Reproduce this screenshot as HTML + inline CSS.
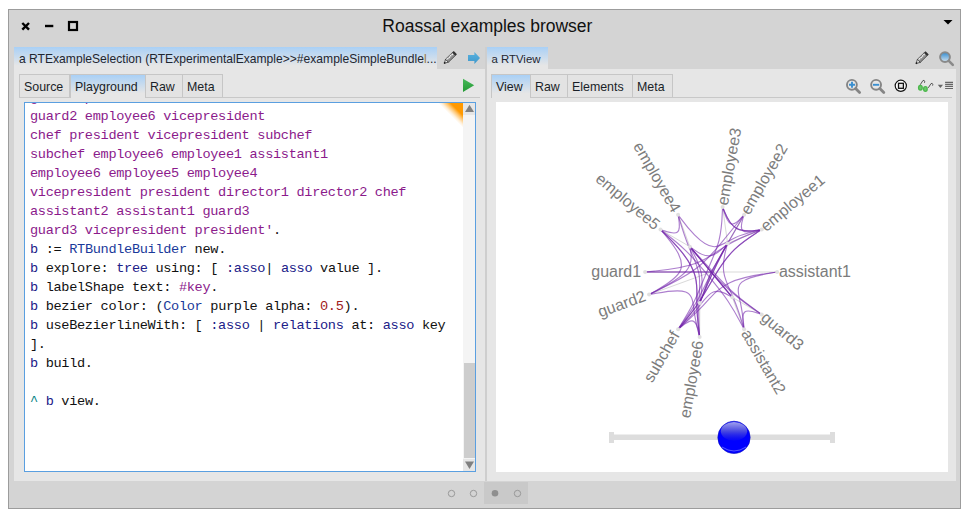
<!DOCTYPE html>
<html><head><meta charset="utf-8">
<style>
*{margin:0;padding:0;box-sizing:border-box}
html,body{width:971px;height:520px;background:#fff;overflow:hidden;font-family:"Liberation Sans",sans-serif;color:#222}
.abs{position:absolute}
#win{position:absolute;left:8px;top:9px;width:953px;height:500px;background:#d4d4d4;border:1px solid #9c9c9c}
#title{position:absolute;left:0;top:0;width:971px;text-align:center;font-size:17.5px;color:#111}
.pane{position:absolute;background:#e6e6e6}
.ptab{position:absolute;height:22px;background:linear-gradient(#a9d0f6,#e6e6e6 85%);font-size:12.1px;line-height:24px;padding-left:5px;white-space:nowrap;overflow:hidden;color:#1f2630}
.tab{position:absolute;top:74px;height:23px;border:1px solid #c6c6c6;border-bottom:none;background:#e3e3e3;font-size:12.4px;line-height:25px;color:#1a1f28;padding-left:4px;white-space:nowrap}
.tab.sel{height:24px;background:linear-gradient(#a9d0f6,#e6e6e6 80%)}
.code{position:absolute;font-family:"Liberation Mono",monospace;font-size:13.6px;letter-spacing:-0.32px;line-height:19px;white-space:pre;color:#111}
.p{color:#8b1a8b}.v{color:#202088}.c{color:#1a3a9a}.n{color:#a02020}.t{color:#008080}
</style></head><body>
<div id="win"></div>
<div id="title" style="top:15.9px;padding-left:3.8px">Roassal examples browser</div>

<!-- window buttons -->
<svg class="abs" style="left:0;top:0" width="971" height="60">
  <path d="M22.3 23 L29 29.7 M29 23 L22.3 29.7" stroke="#000" stroke-width="2.4" stroke-linecap="butt"/>
  <rect x="45" y="24.8" width="8.3" height="2.4" fill="#000"/>
  <rect x="69" y="22" width="8" height="8" fill="none" stroke="#000" stroke-width="2.2"/>
  <path d="M943.5 20 L952.5 20 L948 24.5 Z" fill="#000"/>
</svg>

<!-- left pane -->
<div class="pane" style="left:14px;top:69px;width:471px;height:412px"></div>
<div class="ptab" style="left:14px;top:47px;width:423px">a RTExampleSelection (RTExperimentalExample&gt;&gt;#exampleSimpleBundle<span style="color:#9a7848">l</span>...</div>


<!-- left tabs -->
<div class="abs" style="left:19px;top:97px;width:461px;height:1px;background:#c8c8c8"></div>
<div class="tab" style="left:19px;width:51px">Source</div>
<div class="tab sel" style="left:70px;width:76px;height:24px">Playground</div>
<div class="tab" style="left:145px;width:38px">Raw</div>
<div class="tab" style="left:182px;width:41px">Meta</div>
<svg class="abs" style="left:462px;top:77px" width="14" height="16"><defs><linearGradient id="playg" x1="0" y1="0" x2="0" y2="1"><stop offset="0" stop-color="#48b85a"/><stop offset="1" stop-color="#239a34"/></linearGradient></defs><path d="M1 1.7 L12.2 8.3 L1 15 Z" fill="url(#playg)"/></svg>
<!-- code area -->
<div class="abs" style="left:24px;top:102px;width:452px;height:370px;background:#fff;border:1px solid #5a9fe0;overflow:hidden">
 <div class="code" style="left:5px;top:-15.0px"><span class="p">guard1 president director1</span>
<span class="p">guard2 employee6 vicepresident</span>
<span class="p">chef president vicepresident subchef</span>
<span class="p">subchef employee6 employee1 assistant1</span>
<span class="p">employee6 employee5 employee4</span>
<span class="p">vicepresident president director1 director2 chef</span>
<span class="p">assistant2 assistant1 guard3</span>
<span class="p">guard3 vicepresident president'</span>.
<span class="v">b</span> := <span class="c">RTBundleBuilder</span> new.
<span class="v">b</span> explore: <span class="v">tree</span> using: [ <span class="v">:asso</span>| <span class="v">asso</span> value ].
<span class="v">b</span> labelShape text: <span class="p">#key</span>.
<span class="v">b</span> bezier color: (<span class="c">Color</span> purple alpha: <span class="n">0.5</span>).
<span class="v">b</span> useBezierlineWith: [ <span class="v">:asso</span> | <span class="v">relations</span> at: <span class="v">asso</span> key
].
<span class="v">b</span> build.

<span class="t">^</span> <span class="v">b</span> view.</div>
 <div class="abs" style="left:414px;top:0;width:24px;height:24px;background:linear-gradient(to bottom left,#ff9900 0,#ff9900 26%,rgba(255,153,0,0.55) 35%,rgba(255,153,0,0.15) 45%,rgba(255,153,0,0) 52%)"></div>
 <div class="abs" style="left:438px;top:0;width:12px;height:368px;background:#f4f4f4"></div>
 <div class="abs" style="left:438px;top:0;width:12px;height:12px;background:#e6e6e6"></div>
 <svg class="abs" style="left:440px;top:1px" width="10" height="10"><path d="M0 8 L4.5 0.8 L9 8 Z" fill="#808080"/></svg>
 <div class="abs" style="left:439px;top:260px;width:11px;height:95px;background:#cdcdcd"></div>
 <div class="abs" style="left:438px;top:356px;width:12px;height:12px;background:#e6e6e6"></div>
 <svg class="abs" style="left:440px;top:358px" width="10" height="10"><path d="M0 0.5 L9 0.5 L4.5 8 Z" fill="#808080"/></svg>
</div>

<!-- right pane -->
<div class="abs" style="left:485px;top:47px;width:2px;height:434px;background:#cecece"></div>
<div class="pane" style="left:487px;top:69px;width:469px;height:412px"></div>
<div class="ptab" style="left:487px;top:47px;width:61px;font-size:11.4px;padding-left:4.5px">a RTView</div>


<!-- right tabs -->
<div class="abs" style="left:491px;top:97px;width:461px;height:1px;background:#c8c8c8"></div>
<div class="tab sel" style="left:491px;width:40px">View</div>
<div class="tab" style="left:530px;width:38px">Raw</div>
<div class="tab" style="left:567px;width:66px">Elements</div>
<div class="tab" style="left:632px;width:41px">Meta</div>
<div class="abs" style="left:496px;top:102px;width:452px;height:370px;background:#fff"></div>

<!-- GRAPH -->
<svg class="abs" style="left:0;top:0" width="971" height="520"><g stroke="#d9d9d9" stroke-width="1" fill="none"><path d="M777.1 272.0 L711.1 272.0"/><path d="M761.7 314.4 L732.3 297.3"/><path d="M744.1 329.2 L732.3 297.3"/><path d="M699.6 337.0 L699.8 303.0"/><path d="M678.1 329.2 L699.8 303.0"/><path d="M649.1 294.6 L711.1 272.0"/><path d="M645.1 272.0 L711.1 272.0"/><path d="M660.5 229.6 L689.9 246.7"/><path d="M678.1 214.8 L689.9 246.7"/><path d="M722.6 207.0 L727.6 243.4"/><path d="M744.1 214.8 L727.6 243.4"/><path d="M761.7 229.6 L727.6 243.4"/><path d="M732.3 297.3 L711.1 272.0"/><path d="M699.8 303.0 L711.1 272.0"/><path d="M689.9 246.7 L711.1 272.0"/><path d="M727.6 243.4 L711.1 272.0"/></g><g stroke="#7222aa" stroke-opacity="0.58" stroke-width="1.15" fill="none"><path d="M645.1 272.0 L711.1 272.0"/><path d="M645.1 272.0 C645.1 272.0 645.1 272.0 654.3 271.1 C663.5 270.1 681.9 268.2 695.3 263.5 C708.7 258.7 717.2 251.1 727.4 245.0 C737.7 238.9 749.7 234.2 755.7 231.9 C761.7 229.6 761.7 229.6 761.7 229.6"/><path d="M649.1 294.6 C649.1 294.6 649.1 294.6 656.4 293.3 C663.7 291.9 678.4 289.3 685.7 292.0 C693.0 294.8 693.0 302.9 694.1 311.2 C695.2 319.6 697.4 328.3 698.5 332.7 C699.6 337.0 699.6 337.0 699.6 337.0"/><path d="M649.1 294.6 C649.1 294.6 649.1 294.6 656.6 290.7 C664.2 286.9 679.3 279.2 686.1 271.2 C692.9 263.2 691.4 255.0 690.6 250.8 C689.9 246.7 689.9 246.7 689.9 246.7"/><path d="M649.1 294.6 C649.1 294.6 649.1 294.6 657.4 290.5 C665.7 286.5 682.3 278.5 694.4 269.8 C706.5 261.1 714.0 251.9 721.5 242.6 C729.1 233.4 736.6 224.1 740.3 219.5 C744.1 214.8 744.1 214.8 744.1 214.8"/><path d="M732.3 297.3 L711.1 272.0"/><path d="M732.3 297.3 C732.3 297.3 732.3 297.3 728.8 293.1 C725.2 288.9 718.2 280.4 711.1 272.0 C704.0 263.6 697.0 255.1 693.4 250.9 C689.9 246.7 689.9 246.7 689.9 246.7"/><path d="M732.3 297.3 C732.3 297.3 732.3 297.3 729.0 295.5 C725.7 293.6 719.0 290.0 713.3 292.0 C707.7 294.0 703.0 301.6 697.3 308.7 C691.6 315.9 684.9 322.5 681.5 325.8 C678.1 329.2 678.1 329.2 678.1 329.2"/><path d="M678.1 329.2 C678.1 329.2 678.1 329.2 681.0 326.8 C683.9 324.5 689.7 319.7 693.2 321.1 C696.8 322.4 698.2 329.7 698.9 333.3 C699.6 337.0 699.6 337.0 699.6 337.0"/><path d="M678.1 329.2 C678.1 329.2 678.1 329.2 681.7 324.9 C685.2 320.6 692.4 312.1 698.4 303.0 C704.5 294.0 709.6 284.5 715.1 275.2 C720.7 265.9 726.8 256.9 734.6 249.3 C742.5 241.8 752.1 235.7 756.9 232.6 C761.7 229.6 761.7 229.6 761.7 229.6"/><path d="M678.1 329.2 C678.1 329.2 678.1 329.2 682.5 325.3 C686.8 321.4 695.6 313.6 703.3 305.4 C711.0 297.1 717.6 288.4 729.8 282.7 C741.9 277.1 759.5 274.5 768.3 273.3 C777.1 272.0 777.1 272.0 777.1 272.0"/><path d="M699.6 337.0 C699.6 337.0 699.6 337.0 699.0 331.8 C698.4 326.6 697.1 316.2 696.9 306.2 C696.8 296.1 697.7 286.3 695.4 277.1 C693.2 267.9 687.6 259.2 681.2 251.4 C674.9 243.6 667.7 236.6 664.1 233.1 C660.5 229.6 660.5 229.6 660.5 229.6"/><path d="M699.6 337.0 C699.6 337.0 699.6 337.0 699.3 331.6 C699.0 326.1 698.3 315.3 698.7 304.7 C699.1 294.1 700.7 283.8 699.0 274.1 C697.2 264.4 692.3 255.3 688.3 245.5 C684.3 235.7 681.2 225.3 679.6 220.1 C678.1 214.8 678.1 214.8 678.1 214.8"/><path d="M689.9 246.7 L711.1 272.0"/><path d="M689.9 246.7 C689.9 246.7 689.9 246.7 692.3 251.1 C694.8 255.5 699.7 264.3 701.4 273.7 C703.0 283.1 701.4 293.1 700.6 298.0 C699.8 303.0 699.8 303.0 699.8 303.0"/><path d="M689.9 246.7 C689.9 246.7 689.9 246.7 693.3 249.1 C696.6 251.6 703.4 256.4 709.7 255.8 C716.0 255.3 721.8 249.4 724.7 246.4 C727.6 243.4 727.6 243.4 727.6 243.4"/><path d="M689.9 246.7 C689.9 246.7 689.9 246.7 693.4 250.9 C697.0 255.1 704.0 263.6 711.1 272.0 C718.2 280.4 725.2 288.9 728.8 293.1 C732.3 297.3 732.3 297.3 732.3 297.3"/><path d="M744.1 329.2 C744.1 329.2 744.1 329.2 743.7 324.7 C743.2 320.2 742.3 311.3 740.5 303.1 C738.7 294.8 735.9 287.2 741.8 282.1 C747.8 277.1 762.4 274.5 769.8 273.3 C777.1 272.0 777.1 272.0 777.1 272.0"/><path d="M744.1 329.2 C744.1 329.2 744.1 329.2 743.5 325.5 C742.9 321.8 741.7 314.4 744.7 312.0 C747.6 309.5 754.6 312.0 758.1 313.2 C761.7 314.4 761.7 314.4 761.7 314.4"/><path d="M761.7 314.4 C761.7 314.4 761.7 314.4 757.1 311.2 C752.6 308.0 743.5 301.5 735.3 294.3 C727.0 287.0 719.6 279.0 712.2 270.9 C704.8 262.9 697.3 254.8 693.6 250.8 C689.9 246.7 689.9 246.7 689.9 246.7"/><path d="M761.7 314.4 C761.7 314.4 761.7 314.4 757.0 311.3 C752.4 308.2 743.2 301.9 734.8 294.8 C726.3 287.8 718.7 279.9 714.9 275.9 C711.1 272.0 711.1 272.0 711.1 272.0"/><path d="M761.7 229.6 C761.7 229.6 761.7 229.6 757.7 230.5 C753.7 231.4 745.7 233.1 742.8 230.7 C739.8 228.2 742.0 221.5 743.0 218.2 C744.1 214.8 744.1 214.8 744.1 214.8"/><path d="M761.7 229.6 C761.7 229.6 761.7 229.6 756.9 230.2 C752.2 230.8 742.8 232.1 736.3 228.3 C729.8 224.6 726.2 215.8 724.4 211.4 C722.6 207.0 722.6 207.0 722.6 207.0"/><path d="M761.7 229.6 C761.7 229.6 761.7 229.6 756.9 232.6 C752.1 235.7 742.5 241.8 734.6 249.3 C726.8 256.9 720.7 265.9 715.1 275.2 C709.6 284.5 704.5 294.0 698.4 303.0 C692.4 312.1 685.2 320.6 681.7 324.9 C678.1 329.2 678.1 329.2 678.1 329.2"/><path d="M744.1 214.8 C744.1 214.8 744.1 214.8 741.7 217.4 C739.4 220.0 734.6 225.2 731.0 223.9 C727.4 222.6 725.0 214.8 723.8 210.9 C722.6 207.0 722.6 207.0 722.6 207.0"/><path d="M744.1 214.8 C744.1 214.8 744.1 214.8 741.4 219.6 C738.6 224.4 733.1 233.9 727.6 243.4 C722.1 252.9 716.6 262.5 711.6 272.2 C706.6 282.0 702.2 292.0 696.7 301.6 C691.2 311.1 684.6 320.1 681.4 324.6 C678.1 329.2 678.1 329.2 678.1 329.2"/><path d="M722.6 207.0 C722.6 207.0 722.6 207.0 724.4 211.4 C726.2 215.8 729.8 224.6 736.3 228.3 C742.8 232.1 752.2 230.8 756.9 230.2 C761.7 229.6 761.7 229.6 761.7 229.6"/><path d="M722.6 207.0 C722.6 207.0 722.6 207.0 722.3 212.7 C722.1 218.4 721.6 229.7 719.0 240.3 C716.4 250.9 711.6 260.6 707.3 270.7 C703.1 280.7 699.3 291.0 694.5 300.8 C689.7 310.6 683.9 319.9 681.0 324.5 C678.1 329.2 678.1 329.2 678.1 329.2"/><path d="M678.1 214.8 C678.1 214.8 678.1 214.8 678.7 218.5 C679.3 222.2 680.5 229.6 677.5 232.0 C674.6 234.5 667.6 232.0 664.1 230.8 C660.5 229.6 660.5 229.6 660.5 229.6"/><path d="M678.1 214.8 C678.1 214.8 678.1 214.8 680.7 218.3 C683.2 221.7 688.4 228.6 694.5 234.8 C700.6 241.0 707.6 246.5 714.1 246.7 C720.7 246.9 726.8 241.6 734.6 237.9 C742.5 234.1 752.1 231.9 756.9 230.7 C761.7 229.6 761.7 229.6 761.7 229.6"/><path d="M660.5 229.6 C660.5 229.6 660.5 229.6 663.2 232.7 C665.9 235.9 671.3 242.2 675.8 249.3 C680.4 256.5 684.1 264.4 679.5 272.1 C674.9 279.8 662.0 287.2 655.5 290.9 C649.1 294.6 649.1 294.6 649.1 294.6"/><path d="M660.5 229.6 C660.5 229.6 660.5 229.6 664.1 233.1 C667.7 236.6 674.9 243.6 681.2 251.4 C687.6 259.2 693.2 267.9 695.4 277.1 C697.7 286.3 696.8 296.1 696.9 306.2 C697.1 316.2 698.4 326.6 699.0 331.8 C699.6 337.0 699.6 337.0 699.6 337.0"/><path d="M660.5 229.6 C660.5 229.6 660.5 229.6 664.9 233.0 C669.2 236.3 677.9 243.1 685.7 250.6 C693.5 258.2 700.6 266.6 707.6 274.9 C714.6 283.3 721.6 291.7 727.7 300.7 C733.8 309.8 739.0 319.5 741.5 324.3 C744.1 329.2 744.1 329.2 744.1 329.2"/><path d="M699.8 303.0 C699.8 303.0 699.8 303.0 701.9 297.9 C703.9 292.8 708.0 282.7 712.7 272.7 C717.3 262.8 722.4 253.1 725.0 248.3 C727.6 243.4 727.6 243.4 727.6 243.4"/><path d="M727.6 243.4 C727.6 243.4 727.6 243.4 725.0 248.3 C722.4 253.1 717.3 262.8 712.7 272.7 C708.0 282.7 703.9 292.8 701.9 297.9 C699.8 303.0 699.8 303.0 699.8 303.0"/><path d="M727.6 243.4 C727.6 243.4 727.6 243.4 726.3 248.2 C725.0 252.9 722.5 262.5 723.7 271.7 C724.9 280.9 729.9 289.7 733.9 299.3 C737.9 308.8 741.0 319.0 742.6 324.1 C744.1 329.2 744.1 329.2 744.1 329.2"/><path d="M711.1 272.0 L645.1 272.0"/><path d="M711.1 272.0 L699.8 303.0"/><path d="M711.1 272.0 L727.6 243.4"/></g><g fill="#e0e0e0"><circle cx="777.1" cy="272.0" r="2"/><circle cx="761.7" cy="314.4" r="2"/><circle cx="744.1" cy="329.2" r="2"/><circle cx="699.6" cy="337.0" r="2"/><circle cx="678.1" cy="329.2" r="2"/><circle cx="649.1" cy="294.6" r="2"/><circle cx="645.1" cy="272.0" r="2"/><circle cx="660.5" cy="229.6" r="2"/><circle cx="678.1" cy="214.8" r="2"/><circle cx="722.6" cy="207.0" r="2"/><circle cx="744.1" cy="214.8" r="2"/><circle cx="761.7" cy="229.6" r="2"/><circle cx="732.3" cy="297.3" r="2"/><circle cx="699.8" cy="303.0" r="2"/><circle cx="689.9" cy="246.7" r="2"/><circle cx="727.6" cy="243.4" r="2"/></g><g fill="#7c7c7c" font-size="16" font-family="Liberation Sans"><text transform="translate(777.1 272.0) rotate(0.0)" x="1.8" y="4.8">assistant1</text><text transform="translate(761.7 314.4) rotate(40.0)" x="1.8" y="4.8">guard3</text><text transform="translate(744.1 329.2) rotate(60.0)" x="1.8" y="4.8">assistant2</text><text transform="translate(699.6 337.0) rotate(-80.0)" x="-4" y="4.8" text-anchor="end">employee6</text><text transform="translate(678.1 329.2) rotate(-60.0)" x="-4" y="4.8" text-anchor="end">subchef</text><text transform="translate(649.1 294.6) rotate(-20.0)" x="-4" y="4.8" text-anchor="end">guard2</text><text transform="translate(645.1 272.0) rotate(0.0)" x="-4" y="4.8" text-anchor="end">guard1</text><text transform="translate(660.5 229.6) rotate(40.0)" x="-4" y="4.8" text-anchor="end">employee5</text><text transform="translate(678.1 214.8) rotate(60.0)" x="-4" y="4.8" text-anchor="end">employee4</text><text transform="translate(722.6 207.0) rotate(-80.0)" x="1.8" y="4.8">employee3</text><text transform="translate(744.1 214.8) rotate(-60.0)" x="1.8" y="4.8">employee2</text><text transform="translate(761.7 229.6) rotate(-40.0)" x="1.8" y="4.8">employee1</text></g></svg>
<!-- /GRAPH -->

<!-- slider -->
<svg class="abs" style="left:0;top:0" width="971" height="520">
 <defs>
  <radialGradient id="ballg" cx="0.5" cy="0.3" r="0.6">
   <stop offset="0" stop-color="#8080f0"/><stop offset="0.55" stop-color="#2020e8"/><stop offset="1" stop-color="#0000ff"/>
  </radialGradient>
  <linearGradient id="ballh" x1="0" y1="0" x2="0" y2="1"><stop offset="0" stop-color="#a0a0ee"/><stop offset="0.5" stop-color="#4848e0"/><stop offset="1" stop-color="#1a1ae8" stop-opacity="0.3"/></linearGradient>
 </defs>
 <rect x="609" y="434.5" width="226" height="5.5" fill="#dddddd"/>
 <rect x="609" y="432" width="5" height="11" fill="#dddddd"/>
 <rect x="830" y="432" width="5" height="11" fill="#dddddd"/>
 <circle cx="734" cy="437.4" r="16.2" fill="#0000ff" stroke="#1010c0" stroke-width="0.6"/>
 <ellipse cx="734" cy="431.3" rx="13.2" ry="9.3" fill="url(#ballh)"/>
 <path d="M722 447 Q734 455 746 447" stroke="#a0a0ff" stroke-width="0.8" fill="none" opacity="0.7"/>
</svg>

<!-- bottom bar -->
<div class="abs" style="left:484px;top:482px;width:44px;height:22px;background:#c9c9c9"></div>


<!-- icons overlay -->
<svg class="abs" style="left:0;top:0" width="971" height="520">
 <defs>
  <linearGradient id="lens" x1="0" y1="0" x2="0" y2="1"><stop offset="0" stop-color="#2f8ad0"/><stop offset="1" stop-color="#d6e4ee"/></linearGradient>
  <linearGradient id="arr" x1="0" y1="0" x2="0" y2="1"><stop offset="0" stop-color="#5ab2de"/><stop offset="1" stop-color="#3f98cc"/></linearGradient>
  <g id="pencil">
   <path d="M0.6 0 L4.2 -2.1 L4.2 2.1 Z" fill="#f2f2f2" stroke="#3a3a3a" stroke-width="0.8" stroke-linejoin="round"/>
   <circle cx="0.9" cy="0" r="0.9" fill="#222"/>
   <rect x="4.2" y="-2.1" width="9.6" height="4.2" fill="#8c8c8c" stroke="#3c3c3c" stroke-width="0.7"/>
   <rect x="4.6" y="-1.7" width="9" height="1.5" fill="#fff"/>
   <path d="M4.8 -0.95 H13.6" stroke="#a0a0a0" stroke-width="1.5" stroke-dasharray="1 1"/>
   <rect x="13.6" y="-2.3" width="2.2" height="4.6" fill="#333"/>
  </g>
 </defs>
 <use href="#pencil" transform="translate(444,63.6) rotate(-44)"/>
 <path d="M468 55 H474.4 V52 L480 58 L474.4 64 V61 H468 Z" fill="url(#arr)"/>
 <use href="#pencil" transform="translate(915.8,63.8) rotate(-44)"/>
 <circle cx="945" cy="57.1" r="4.9" fill="url(#lens)" stroke="#8a8a8a" stroke-width="2"/>
 <path d="M948.8 60.9 L952.8 64.9" stroke="#8a8a8a" stroke-width="2.6" stroke-linecap="round"/>
 <!-- toolbar -->
 <g stroke="#858585" fill="none">
  <circle cx="851.9" cy="84.8" r="4.95" stroke-width="1.9"/>
  <path d="M855.6 88.5 L859.6 92.5" stroke-width="2.8" stroke-linecap="round"/>
  <circle cx="876.1" cy="84.8" r="4.95" stroke-width="1.9"/>
  <path d="M879.8 88.5 L883.8 92.5" stroke-width="2.8" stroke-linecap="round"/>
 </g>
 <path d="M849 84.8 H855 M852 81.8 V87.8" stroke="#3a8fd0" stroke-width="1.9"/>
 <path d="M873 84.8 H879.2" stroke="#3a8fd0" stroke-width="1.9"/>
 <circle cx="900.8" cy="85.8" r="5.6" fill="#fff" stroke="#111" stroke-width="1.2"/>
 <rect x="898.5" y="83.3" width="4.9" height="5" fill="#e8e8e8" stroke="#111" stroke-width="1.3"/>
 <path d="M920.2 84.8 L922.9 80.6 Q924.3 79.8 924.7 81.2 L924.5 82.8 M928.3 87.8 L931 83.6 Q932.4 82.8 932.8 84.2 L932.6 85.6" stroke="#555" stroke-width="1" fill="none"/>
 <ellipse cx="920.4" cy="87.8" rx="2.5" ry="3" fill="#4cb84c"/>
 <ellipse cx="925.4" cy="88.9" rx="2.5" ry="3" fill="#4cb84c"/>
 <ellipse cx="920.4" cy="87.8" rx="1.2" ry="1.8" fill="#7fd07f" opacity="0.6"/>
 <ellipse cx="925.4" cy="88.9" rx="1.2" ry="1.8" fill="#7fd07f" opacity="0.6"/>
 <path d="M937.8 84.8 H943 L940.4 87.9 Z" fill="#666"/>
 <path d="M945.1 82.3 H953 M945.1 84.4 H953 M945.1 86.4 H953 M945.1 88.5 H953" stroke="#666" stroke-width="1.2"/>
 <!-- pager -->
 <circle cx="451.5" cy="493.5" r="3.2" fill="none" stroke="#999" stroke-width="1"/>
 <circle cx="473.5" cy="493.5" r="3.2" fill="none" stroke="#999" stroke-width="1"/>
 <circle cx="495" cy="493.2" r="3.3" fill="#8f8f8f"/>
 <circle cx="517.5" cy="493.5" r="3.2" fill="none" stroke="#999" stroke-width="1"/>
</svg>

</body></html>
